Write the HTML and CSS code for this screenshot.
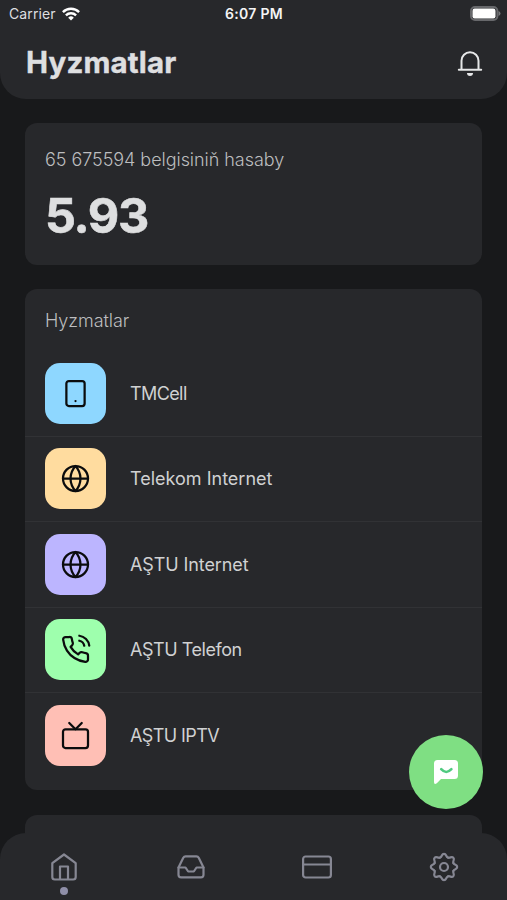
FILE: index.html
```html
<!DOCTYPE html>
<html lang="tk">
<head>
<meta charset="utf-8">
<meta name="viewport" content="width=device-width, initial-scale=1">
<title>Hyzmatlar</title>
<link rel="stylesheet" href="styles.css">
</head>
<body>
<div class="app">
  <header class="header">
    <div class="status">
      <div class="carrier"><span class="carrier-name">Carrier</span>
        <svg width="18" height="14" viewBox="0 0 18 14" fill="none" stroke="#fff" stroke-width="2.4"><path d="M.9 5.1a11.5 11.5 0 0 1 16.2 0M3.9 8.3a7.2 7.2 0 0 1 10.2 0"/><path d="M9 13.6 6.2 10.7a4 4 0 0 1 5.6 0z" fill="#fff" stroke="none"/></svg>
      </div>
      <span class="clock">6:07 PM</span>
      <svg class="battery" width="31" height="15" viewBox="0 0 31 15"><rect x="1" y="1" width="26.4" height="13" rx="4" fill="none" stroke="#67686b" stroke-width="2"/><rect x="2.5" y="2.5" width="23" height="10" rx="2.2" fill="#fff"/><path d="M28.5 5v5q2-.8 2-2.500t-2-2.500z" fill="#77787b"/></svg>
    </div>
    <div class="title-row">
      <h1 class="title">Hyzmatlar</h1>
      <svg width="26" height="26" viewBox="0 0 26 26" fill="none" stroke="#e6e7e8" stroke-width="2" stroke-linecap="round" stroke-linejoin="round"><path d="M4.500 18.500V9.700a8.500 8.500 0 0 1 17 0v8.800M1.800 18.700h22.400"/><path d="M10 22h6a3 3 0 0 1-6 0z" fill="#e6e7e8" stroke="none"/></svg>
    </div>
  </header>

  <main class="content">
    <section class="card balance">
      <p class="label account">65 675594 belgisiniň hasaby</p>
      <p class="amount">5.93</p>
    </section>
    <section class="card services">
      <h2 class="label services-title">Hyzmatlar</h2>
      <ul class="list">
        <li class="row"><span class="tile blue"><svg class="icon" viewBox="-.4 -.4 24.8 24.8"><rect x="4.700" y="2" width="14.600" height="20" rx="2"/><path d="M12 18h.01"/></svg></span><span class="name tight">TMCell</span></li>
        <li class="row"><span class="tile yellow"><svg class="icon" viewBox="-.4 -.4 24.8 24.8"><circle cx="12" cy="12" r="10"/><path d="M2 12h20M12 2a15.300 15.300 0 0 1 4 10 15.300 15.300 0 0 1-4 10 15.300 15.300 0 0 1-4-10 15.300 15.300 0 0 1 4-10z"/></svg></span><span class="name loose">Telekom Internet</span></li>
        <li class="row"><span class="tile violet"><svg class="icon" viewBox="-.4 -.4 24.8 24.8"><circle cx="12" cy="12" r="10"/><path d="M2 12h20M12 2a15.300 15.300 0 0 1 4 10 15.300 15.300 0 0 1-4 10 15.300 15.300 0 0 1-4-10 15.300 15.300 0 0 1 4-10z"/></svg></span><span class="name">AŞTU Internet</span></li>
        <li class="row"><span class="tile green"><svg class="icon" viewBox="-.4 -.4 24.8 24.8"><path d="M15.050 5A5 5 0 0 1 19 8.950M15.050 1A9 9 0 0 1 23 8.940m-1 7.980v3a2 2 0 0 1-2.180 2 19.790 19.790 0 0 1-8.630-3.070 19.500 19.500 0 0 1-6-6 19.790 19.790 0 0 1-3.070-8.670A2 2 0 0 1 4.110 2h3a2 2 0 0 1 2 1.720 12.840 12.840 0 0 0 .7 2.810 2 2 0 0 1-.45 2.110L8.090 9.910a16 16 0 0 0 6 6l1.270-1.270a2 2 0 0 1 2.110-.45 12.840 12.840 0 0 0 2.810.7A2 2 0 0 1 22 16.920z"/></svg></span><span class="name snug">AŞTU Telefon</span></li>
        <li class="row"><span class="tile pink"><svg class="icon" viewBox="-.4 -.4 24.8 24.8"><rect x="2" y="7" width="20" height="15" rx="2"/><path d="m17 2-5 5-5-5"/></svg></span><span class="name tight">AŞTU IPTV</span></li>
      </ul>
    </section>
    <section class="card next"></section>
  </main>

  <button class="chat" aria-label="Chat">
    <svg width="26" height="26" viewBox="0 0 26 26"><path d="M4.500 1h17a3.500 3.500 0 0 1 3.500 3.500v12a3.500 3.500 0 0 1-3.500 3.500H8l-4.200 4.200Q1 26 1 23V4.500A3.500 3.500 0 0 1 4.500 1z" fill="#fff"/><path d="M8.200 10.200q5 5.500 10.200 0" fill="none" stroke="#50ca80" stroke-width="2.600" stroke-linecap="round"/></svg>
  </button>

  <nav class="tabs">
    <a class="tab active"><svg width="30" height="30" viewBox="0 0 30 30"><path d="M3.300 11.200 15 2.500l11.700 8.700V25a2.500 2.500 0 0 1-2.500 2.500H5.800A2.500 2.500 0 0 1 3.300 25zM11 27.500v-13h8v13"/></svg></a>
    <a class="tab"><svg width="30" height="30" viewBox="0 0 30 30"><path d="M27.500 15.500h-7l-2.700 4h-5.600l-2.700-4h-7"/><path d="M7.300 5.700 2.500 15.500v7.300a2.600 2.600 0 0 0 2.600 2.600h19.800a2.600 2.600 0 0 0 2.600-2.600v-7.300l-4.800-9.800a2.600 2.600 0 0 0-2.300-1.400H9.600a2.600 2.600 0 0 0-2.300 1.400z"/></svg></a>
    <a class="tab"><svg width="30" height="30" viewBox="0 0 30 30"><rect x="1.100" y="4.500" width="27.800" height="21" rx="2.500"/><path d="M1 12.500h28"/></svg></a>
    <a class="tab"><svg width="30" height="30" viewBox="-15 -15 30 30"><circle r="4"/><g id="gear-half"><path id="tooth" d="M-3.900-9.400C-1.600-10.300-2.600-13.200 0-13.200S1.600-10.300 3.900-9.400"/><use href="#tooth" transform="rotate(45)"/><use href="#tooth" transform="rotate(90)"/><use href="#tooth" transform="rotate(135)"/></g><use href="#gear-half" transform="rotate(180)"/></svg></a>
  </nav>
</div>
</body>
</html>
```

FILE: styles.css
```css
* { box-sizing: border-box; margin: 0; padding: 0; }
body {
  background: #18191b;
  color: #dedfe0;
  font-family: Inter, "Liberation Sans", sans-serif;
}
svg { display: block; flex: none; }
.app { position: relative; height: 900px; overflow: hidden; }

.header { height: 98.500px; background: #27282b; border-radius: 0 0 26px 26px; }
.status {
  display: grid;
  grid-template-columns: 1fr auto 1fr;
  align-items: center;
  height: 27px;
  padding: 0 6px 0 9px;
}
.carrier { display: flex; align-items: center; gap: 6px; font-size: 14px; letter-spacing: .1px; }
.clock { margin-left: -2px; font-size: 14px; font-weight: 600; letter-spacing: .3px; color: #f4f4f5; }
.battery { justify-self: end; }
.title-row { display: flex; justify-content: space-between; align-items: center; height: 73px; padding: 0 24px 0 26px; }
.title { font-size: 29.500px; font-weight: 700; letter-spacing: .15px; line-height: 36px; padding-bottom: 3px; -webkit-text-stroke: .4px #dedfe0; }

.content { display: flex; flex-direction: column; gap: 24.500px; padding: 24.500px 25px 0; }
.card { background: #27282b; border-radius: 12px; flex: none; }
.label { font-size: 18px; font-weight: 350; line-height: 24px; color: #bcbdbf; letter-spacing: -.05px; }
.balance { height: 141.500px; padding: 25px 20px; }
.amount { font-size: 48.500px; font-weight: 700; line-height: 60px; margin-top: 14px; letter-spacing: -1.300px; -webkit-text-stroke: .6px #dedfe0; }
.services { height: 501px; padding-top: 20px; }
.services-title { padding-left: 20px; margin-bottom: 18px; }
.list { list-style: none; }
.row { display: flex; align-items: center; gap: 24px; height: 85.500px; padding-left: 20px; border-bottom: 1px solid #313235; }
.row:last-child { border-bottom: 0; }
.tile { display: grid; place-items: center; width: 61px; height: 61px; border-radius: 15px; }
.blue { background: #8ed7ff; }
.yellow { background: #ffdc9f; }
.violet { background: #bcb5ff; }
.green { background: #9effad; }
.pink { background: #ffbfb5; }
.icon { width: 31px; height: 31px; fill: none; stroke: #0b0c0d; stroke-width: 1.800; stroke-linecap: round; stroke-linejoin: round; }
.name { font-size: 18px; font-weight: 400; color: #d0d1d2; letter-spacing: -.1px; }
.tight { letter-spacing: -.6px; }
.snug { letter-spacing: -.45px; }
.loose { letter-spacing: 0; }
.next { height: 120px; }

.chat {
  position: absolute;
  left: 409px;
  top: 735px;
  display: grid;
  place-items: center;
  width: 74px;
  height: 74px;
  border: 0;
  border-radius: 50%;
  background: #7fdf83;
}
.tabs {
  position: absolute;
  inset: auto 0 0;
  display: grid;
  grid-template-columns: repeat(4, 1fr);
  height: 67px;
  padding: 19px 0 0 1px;
  background: #27282b;
  border-radius: 26px 26px 0 0;
}
.tab { display: flex; flex-direction: column; align-items: center; gap: 5px; }
.tab svg { fill: none; stroke: #868793; stroke-width: 2.200; stroke-linecap: round; stroke-linejoin: round; }
.active::after { content: ""; width: 8px; height: 8px; border-radius: 50%; background: #8f8fa8; }
```
